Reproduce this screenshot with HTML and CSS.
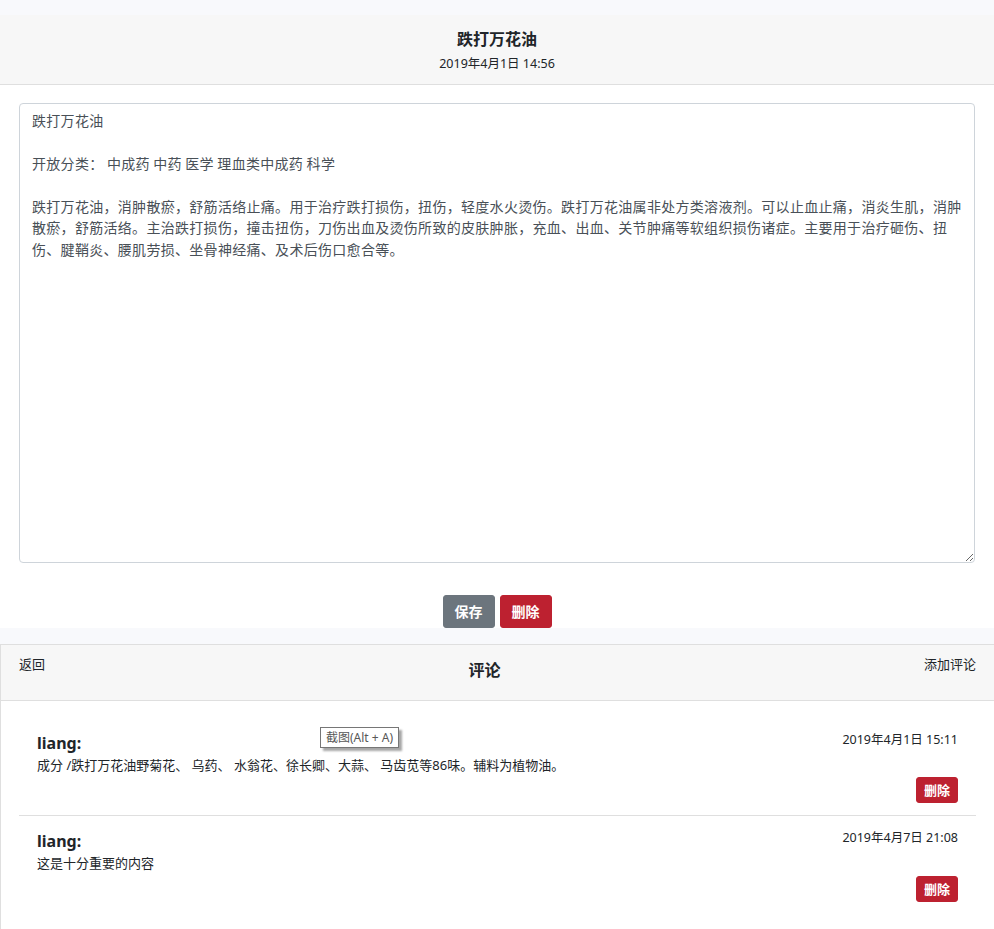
FILE: index.html
```html
<!DOCTYPE html>
<html lang="zh-CN">
<head>
<meta charset="utf-8">
<title>跌打万花油</title>
<link rel="stylesheet" href="styles.css">
</head>
<body>
<div class="page">
  <section class="card note">
    <header class="note-header">
      <h5 class="note-title">跌打万花油</h5>
      <div class="note-date">2019年4月1日 14:56</div>
    </header>
    <div class="note-body">
      <textarea class="editor">跌打万花油

开放分类： 中成药 中药 医学 理血类中成药 科学

跌打万花油，消肿散瘀，舒筋活络止痛。用于治疗跌打损伤，扭伤，轻度水火烫伤。跌打万花油属非处方类溶液剂。可以止血止痛，消炎生肌，消肿散瘀，舒筋活络。主治跌打损伤，撞击扭伤，刀伤出血及烫伤所致的皮肤肿胀，充血、出血、关节肿痛等软组织损伤诸症。主要用于治疗砸伤、扭伤、腱鞘炎、腰肌劳损、坐骨神经痛、及术后伤口愈合等。</textarea>
      <div class="actions">
        <button class="btn btn-secondary">保存</button>
        <button class="btn btn-danger">删除</button>
      </div>
    </div>
  </section>

  <section class="card comments">
    <header class="comments-header">
      <a class="link">返回</a>
      <h5 class="comments-title">评论</h5>
      <a class="link">添加评论</a>
    </header>
    <div class="comments-body">
      <div class="comment">
        <div class="comment-top">
          <span class="comment-name">liang:</span>
          <span class="comment-date">2019年4月1日 15:11</span>
        </div>
        <div class="comment-text">成分 /跌打万花油野菊花、 乌药、 水翁花、徐长卿、大蒜、 马齿苋等86味。辅料为植物油。</div>
        <div class="comment-actions"><button class="btn btn-danger btn-sm">删除</button></div>
      </div>
      <div class="comment">
        <div class="comment-top">
          <span class="comment-name">liang:</span>
          <span class="comment-date">2019年4月7日 21:08</span>
        </div>
        <div class="comment-text">这是十分重要的内容</div>
        <div class="comment-actions"><button class="btn btn-danger btn-sm">删除</button></div>
      </div>
    </div>
  </section>
</div>
<div class="tooltip">截图(Alt + A)</div>
</body>
</html>
```

FILE: styles.css
```css
html, body {
  margin: 0;
  padding: 0;
}
body {
  background: #f8f9fc;
  color: #212529;
  font-family: "Segoe UI", "Noto Sans", "Noto Sans CJK SC", sans-serif;
  font-size: 13px;
  line-height: 1.5;
}
.page {
  padding-top: 15px;
}
.card {
  background: #fff;
}
.note {
  margin-bottom: 16px;
}
.note-header {
  background: #f7f7f7;
  border-bottom: 1px solid #dfdfdf;
  text-align: center;
  padding: 11px 0 10px;
}
.note-title {
  margin: 0 0 4px;
  font-family: "Noto Sans CJK SC", sans-serif;
  font-size: 16px;
  font-weight: 700;
  line-height: 24px;
}
.note-date {
  font-size: 12.5px;
  line-height: 19.5px;
}
.note-body {
  padding: 18px 19px 0;
}
.editor {
  display: block;
  box-sizing: border-box;
  width: 100%;
  height: 460px;
  margin: 0;
  padding: 6px 12px;
  border: 1px solid #ced4da;
  border-radius: 4px;
  font-family: "Noto Sans CJK SC", sans-serif;
  font-size: 14px;
  line-height: 21.5px;
  letter-spacing: 0.3px;
  color: #495057;
  background: #fff;
  outline: none;
}
.actions {
  display: flex;
  justify-content: center;
  gap: 5px;
  margin-top: 32px;
}
.btn {
  font-family: "Noto Sans CJK SC", sans-serif;
  font-weight: 700;
  color: #fff;
  border: 1px solid transparent;
  border-radius: 3px;
  font-size: 14px;
  line-height: 21px;
  padding: 5px 11px;
  cursor: pointer;
}
.btn-secondary {
  background: #6c757d;
  border-color: #6c757d;
}
.btn-danger {
  background: #bd2130;
  border-color: #bd2130;
}
.btn-sm {
  font-size: 13px;
  line-height: 18px;
  padding: 3px 7px;
}
.comments {
  border-top: 1px solid #dfdfdf;
  border-left: 1px solid #dfdfdf;
  min-height: 284px;
}
.comments-header {
  display: flex;
  justify-content: space-between;
  align-items: flex-start;
  background: #f7f7f7;
  border-bottom: 1px solid #dfdfdf;
  padding: 10px 18px 19px;
}
.link {
  font-size: 13px;
  line-height: 19.5px;
  color: #212529;
  cursor: pointer;
}
.comments-title {
  margin: 2px 0 0;
  font-family: "Noto Sans CJK SC", sans-serif;
  font-size: 16px;
  font-weight: 700;
  line-height: 24px;
}
.comments-body {
  padding: 17px 18px 0;
}
.comment {
  padding: 12px 18px;
  border-bottom: 1px solid #dfdfdf;
}
.comment:last-child {
  border-bottom: none;
}
.comment-top {
  display: flex;
  justify-content: space-between;
  align-items: flex-start;
}
.comment-name {
  margin-top: 1px;
  font-size: 16px;
  font-weight: 700;
  line-height: 24px;
}
.comment-date {
  font-size: 12.5px;
  line-height: 19.5px;
}
.comment-text {
  margin-top: 1px;
  font-size: 13px;
  line-height: 19.5px;
}
.comment-actions {
  display: flex;
  justify-content: flex-end;
  margin-top: 2px;
}
.tooltip {
  position: absolute;
  left: 320px;
  top: 727px;
  box-sizing: border-box;
  height: 21px;
  padding: 0 5px;
  background: #fff;
  border: 1px solid #767676;
  box-shadow: 3px 3px 2px rgba(0, 0, 0, 0.35);
  font-size: 12px;
  line-height: 19px;
  color: #575757;
  white-space: nowrap;
}
```
